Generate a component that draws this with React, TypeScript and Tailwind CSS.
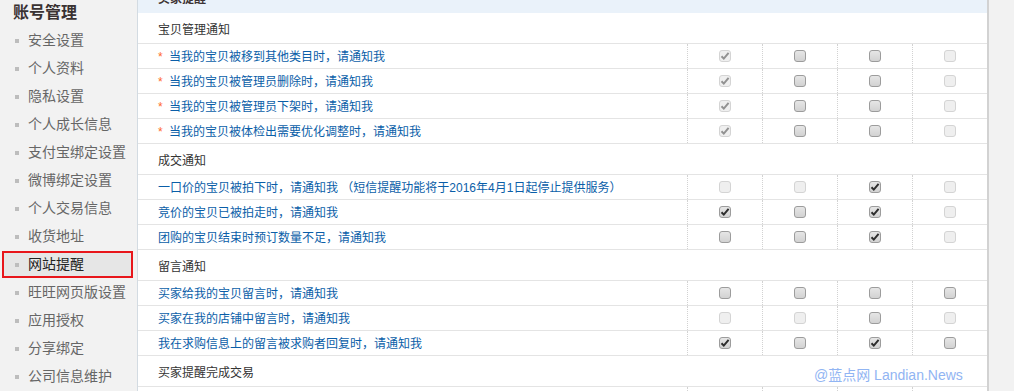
import React from "react";

type Box = "dc" | "u" | "c" | "du";

interface Row {
    text: string;
    star?: boolean;
    boxes: Box[];
}

interface Section {
    title: string;
    rows: Row[];
}

const menu = [
    "安全设置",
    "个人资料",
    "隐私设置",
    "个人成长信息",
    "支付宝绑定设置",
    "微博绑定设置",
    "个人交易信息",
    "收货地址",
    "网站提醒",
    "旺旺网页版设置",
    "应用授权",
    "分享绑定",
    "公司信息维护",
];

const sections: Section[] = [
    {
        title: "宝贝管理通知",
        rows: [
            { text: "当我的宝贝被移到其他类目时，请通知我", star: true, boxes: ["dc", "u", "u", "du"] },
            { text: "当我的宝贝被管理员删除时，请通知我", star: true, boxes: ["dc", "u", "u", "du"] },
            { text: "当我的宝贝被管理员下架时，请通知我", star: true, boxes: ["dc", "u", "u", "du"] },
            { text: "当我的宝贝被体检出需要优化调整时，请通知我", star: true, boxes: ["dc", "u", "u", "du"] },
        ],
    },
    {
        title: "成交通知",
        rows: [
            { text: "一口价的宝贝被拍下时，请通知我 （短信提醒功能将于2016年4月1日起停止提供服务）", boxes: ["du", "du", "c", "du"] },
            { text: "竞价的宝贝已被拍走时，请通知我", boxes: ["c", "u", "c", "du"] },
            { text: "团购的宝贝结束时预订数量不足，请通知我", boxes: ["u", "u", "c", "du"] },
        ],
    },
    {
        title: "留言通知",
        rows: [
            { text: "买家给我的宝贝留言时，请通知我", boxes: ["u", "u", "u", "u"] },
            { text: "买家在我的店铺中留言时，请通知我", boxes: ["du", "du", "u", "du"] },
            { text: "我在求购信息上的留言被求购者回复时，请通知我", boxes: ["c", "u", "c", "u"] },
        ],
    },
    {
        title: "买家提醒完成交易",
        rows: [
            { text: "买家确认收货时，请通知我", boxes: ["u", "u", "u", "du"] },
        ],
    },
];

function Check({ kind }: { kind: Box }) {
    const disabled = kind === "dc" || kind === "du";
    const checked = kind === "dc" || kind === "c";
    return (
        <span
            className={
                "flex h-[12px] w-[12px] items-center justify-center rounded-[3px] border " +
                (disabled
                    ? "border-[#d4d4d4] bg-[#efefef]"
                    : "border-[#9c9c9c] bg-gradient-to-b from-[#e6e6e6] to-[#d2d2d2]")
            }
        >
            {checked && (
                <svg width="10" height="10" viewBox="0 0 10 10">
                    <path
                        d="M1.5 5.2 L3.8 7.6 L8.6 1.8"
                        fill="none"
                        stroke={disabled ? "#929292" : "#2e2e2e"}
                        strokeWidth="2"
                    />
                </svg>
            )}
        </span>
    );
}

export default function App() {
    return (
        <div
            className="flex h-[391px] w-[1014px] overflow-hidden bg-[#f2f2f2]"
            style={{ fontFamily: '"Liberation Sans", "Noto Sans CJK SC", sans-serif' }}
        >
            {/* sidebar */}
            <div className="w-[137px] shrink-0">
                <div className="h-[27px] pl-[13px] text-[16px] font-bold leading-[25px] text-[#3a3232]">账号管理</div>
                <ul>
                    {menu.map((m) => {
                        const active = m === "网站提醒";
                        return (
                            <li key={m} className="h-[28px]">
                                <div
                                    className={
                                        "ml-[2px] flex h-[27px] w-[131px] items-center border-2 pl-[11px] text-[14px] " +
                                        (active
                                            ? "border-[#e8161b] bg-[#e6e6e6] text-[#222]"
                                            : "border-transparent text-[#666]")
                                    }
                                >
                                    <span className="mr-[9px] h-[4px] w-[4px] bg-[#bdbdbd]" />
                                    {m}
                                </div>
                            </li>
                        );
                    })}
                </ul>
            </div>

            {/* main panel */}
            <div className="relative w-[852px] shrink-0 border-l border-r-2 border-l-[#d3dbe2] border-r-[#d2d2d2] bg-white text-[12px]">
                <div className="-mt-[15px]">
                    <div className="flex h-[28px] items-center bg-[#eaf2fa] pl-[20px] font-bold text-[#3d3333]">买家提醒</div>
                    {sections.map((s) => (
                        <div key={s.title}>
                            <div className="flex h-[31px] items-center border-b border-[#e4e4e4] pl-[20px] pt-[3px] text-[#333]">
                                {s.title}
                            </div>
                            {s.rows.map((r) => (
                                <div key={r.text} className="flex h-[25px] border-b border-[#e4e4e4]">
                                    <div className="flex w-[549px] items-center pl-[20px] pt-[2px] text-[#0a5ea8]">
                                        {r.star && <span className="w-[11px] text-[#ff6a2a]">*</span>}
                                        {r.text}
                                    </div>
                                    {r.boxes.map((b, i) => (
                                        <div
                                            key={i}
                                            className="flex w-[75px] items-center justify-center border-l border-dotted border-[#d2d2d2]"
                                        >
                                            <Check kind={b} />
                                        </div>
                                    ))}
                                </div>
                            ))}
                        </div>
                    ))}
                </div>
                <div className="absolute left-[676px] top-[365px] text-[14px] text-[#86adf2] opacity-90">
                    @蓝点网 Landian.News
                </div>
            </div>
            <div className="flex-1" />
        </div>
    );
}
